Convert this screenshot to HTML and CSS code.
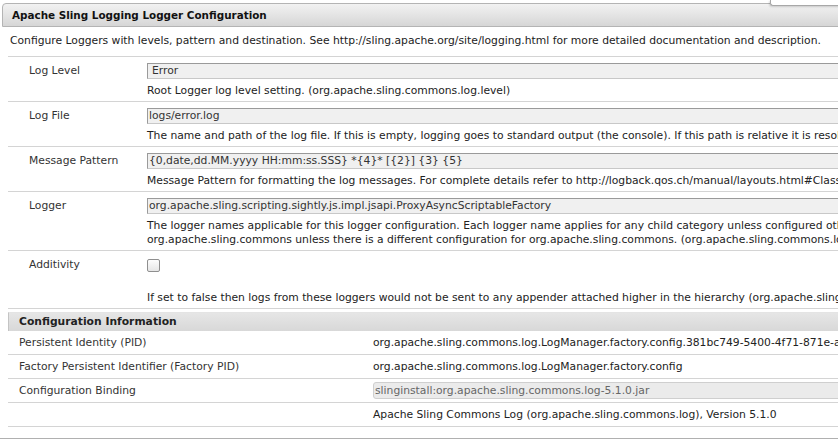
FILE: index.html
```html
<!DOCTYPE html>
<html>
<head>
<meta charset="utf-8">
<link rel="stylesheet" href="styles.css">
</head>
<body>
<div class="corner-tab"></div>
<div class="page">
  <div class="title">Apache Sling Logging Logger Configuration</div>
  <div class="intro">Configure Loggers with levels, pattern and destination. See http://sling.apache.org/site/logging.html for more detailed documentation and description.</div>

  <div class="form">
    <div class="row">
      <div class="label">Log Level</div>
      <div class="field">
        <div class="select">Error</div>
        <div class="desc">Root Logger log level setting. (org.apache.sling.commons.log.level)</div>
      </div>
    </div>
    <div class="row">
      <div class="label">Log File</div>
      <div class="field">
        <div class="input">logs/error.log</div>
        <div class="desc">The name and path of the log file. If this is empty, logging goes to standard output (the console). If this path is relative it is resolved below ${sling.home}. (org.apache.sling.commons.log.file)</div>
      </div>
    </div>
    <div class="row">
      <div class="label">Message Pattern</div>
      <div class="field">
        <div class="input">{0,date,dd.MM.yyyy HH:mm:ss.SSS} *{4}* [{2}] {3} {5}</div>
        <div class="desc">Message Pattern for formatting the log messages. For complete details refer to http://logback.qos.ch/manual/layouts.html#ClassicPatternLayout (org.apache.sling.commons.log.pattern)</div>
      </div>
    </div>
    <div class="row">
      <div class="label">Logger</div>
      <div class="field">
        <div class="input">org.apache.sling.scripting.sightly.js.impl.jsapi.ProxyAsyncScriptableFactory</div>
        <div class="desc">The logger names applicable for this logger configuration. Each logger name applies for any child category unless configured otherwise. E.g. if the logger name is configured to be org.apache.sling then logs for<br>org.apache.sling.commons unless there is a different configuration for org.apache.sling.commons. (org.apache.sling.commons.log.names)</div>
      </div>
    </div>
    <div class="row">
      <div class="label">Additivity</div>
      <div class="field">
        <div class="check-wrap"><span class="checkbox"></span></div>
        <div class="desc">If set to false then logs from these loggers would not be sent to any appender attached higher in the hierarchy (org.apache.sling.commons.log.additiv)</div>
      </div>
    </div>
  </div>

  <div class="info">
    <div class="info-head">Configuration Information</div>
    <div class="info-row"><div class="info-label">Persistent Identity (PID)</div><div class="info-value">org.apache.sling.commons.log.LogManager.factory.config.381bc749-5400-4f71-871e-a8d5fe3b2c91</div></div>
    <div class="info-row"><div class="info-label">Factory Persistent Identifier (Factory PID)</div><div class="info-value">org.apache.sling.commons.log.LogManager.factory.config</div></div>
    <div class="info-row"><div class="info-label">Configuration Binding</div><div class="info-value"><div class="binding">slinginstall:org.apache.sling.commons.log-5.1.0.jar</div></div></div>
    <div class="info-row"><div class="info-label"></div><div class="info-value">Apache Sling Commons Log (org.apache.sling.commons.log), Version 5.1.0</div></div>
  </div>
  <div class="bottom-line"></div>
</div>
</body>
</html>
```

FILE: styles.css
```css
html, body {
  margin: 0;
  padding: 0;
  background: #ffffff;
  overflow: hidden;
}
body {
  width: 838px;
  height: 446px;
  font-family: "DejaVu Sans", Verdana, sans-serif;
  font-size: 10.75px;
  color: #222;
}
.page {
  width: 1200px;
  padding-top: 3px;
}
.corner-tab {
  position: absolute;
  top: 0;
  left: 770px;
  width: 80px;
  height: 5px;
  background: #fff;
  border-left: 1px solid #a8a8a8;
  border-bottom: 1px solid #a8a8a8;
  border-bottom-left-radius: 3px;
  box-shadow: -1px 1px 2px rgba(0,0,0,0.15);
  z-index: 2;
}
.title {
  margin-left: 2px;
  height: 22px;
  line-height: 22px;
  padding-left: 9px;
  font-size: 10.4px;
  font-weight: bold;
  color: #111;
  background: linear-gradient(#f2f2f2, #d6d6d6);
  border: 1px solid #b4b4b4;
  border-top-left-radius: 4px;
  white-space: nowrap;
}
.intro {
  margin-left: 8px;
  padding: 6px 0 7px 2px;
  line-height: 16px;
  border-bottom: 1px solid #d4d4d4;
  white-space: nowrap;
}
.form {
  margin-left: 8px;
}
.row {
  display: flex;
  border-bottom: 1px solid #d4d4d4;
  padding: 6px 0 3px;
}
.label {
  width: 118px;
  padding-left: 21px;
  line-height: 14px;
  padding-top: 1px;
  color: #333;
  flex: none;
}
.field {
  flex: 1;
  white-space: nowrap;
}
.select, .input {
  height: 14px;
  line-height: 14px;
  border: 1px solid #9a9a9a;
  border-right-color: #d0d0d0;
  border-bottom-color: #c8c8c8;
  background: #f0f0f0;
  color: #333;
}
.select {
  padding-left: 4px;
}
.input {
  padding-left: 1px;
}
.desc {
  margin-top: 5px;
  line-height: 14px;
  color: #222;
}
.check-wrap {
  height: 29px;
  padding-top: 2px;
  box-sizing: border-box;
}
.checkbox {
  display: block;
  width: 11px;
  height: 11px;
  border: 1px solid #8f8f8f;
  border-radius: 2px;
  background: linear-gradient(#fdfdfd, #e6e6e6);
}
.info {
  margin-left: 8px;
  margin-top: 3px;
}
.info-head {
  height: 18px;
  line-height: 18px;
  padding-left: 10px;
  font-weight: bold;
  background: linear-gradient(#e6e6e6, #d8d8d8);
  border-left: 1px solid #c4c4c4;
  border-top: 1px solid #e4e4e4;
  color: #222;
}
.info-row {
  display: flex;
  height: 23px;
  align-items: center;
  border-bottom: 1px solid #d4d4d4;
  white-space: nowrap;
}
.info-label {
  width: 354px;
  padding-left: 11px;
  flex: none;
  color: #333;
}
.info-value {
  flex: 1;
  color: #222;
}
.binding {
  height: 15px;
  line-height: 15px;
  padding-left: 1px;
  border: 1px solid #cfcfcf;
  border-radius: 3px;
  background: #ebebeb;
  color: #666;
}
.bottom-line {
  margin-top: 11px;
  border-bottom: 1px solid #b0b0b0;
}
```
